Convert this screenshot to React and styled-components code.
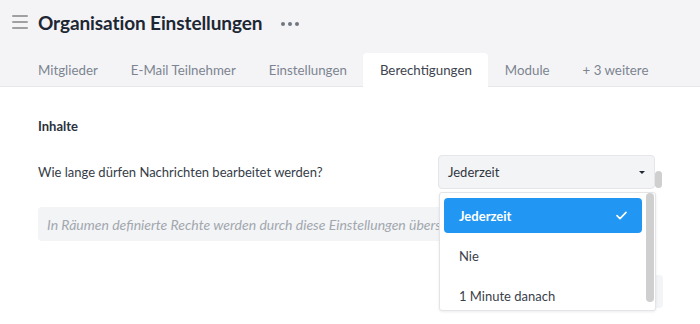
import React from "react";
import styled, { createGlobalStyle } from "styled-components";

const Global = createGlobalStyle`
  html, body { margin: 0; padding: 0; background: #ffffff; }
  body { font-family: "Source Sans Pro", Lato, "Noto Sans", sans-serif; overflow: hidden; }
  * { box-sizing: border-box; }
`;

const Page = styled.div`
  width: 700px;
  height: 324px;
  display: flex;
  flex-direction: column;
  overflow: hidden;
`;

const Header = styled.header`
  background: #f4f4f6;
  border-bottom: 1px solid #e6e7ea;
`;

const TitleRow = styled.div`
  height: 46px;
  display: flex;
  align-items: center;
  padding: 0 0 2px 12px;
`;

const Burger = styled.button`
  border: 0;
  background: none;
  padding: 0;
  width: 16px;
  height: 14px;
  margin-right: 10px;
  display: flex;
  flex-direction: column;
  justify-content: space-between;
  span {
    display: block;
    height: 2px;
    background: #a0a0a3;
    border-radius: 1px;
  }
`;

const Title = styled.h1`
  margin: 0;
  font-size: 19px;
  font-weight: 700;
  color: #1d2733;
  letter-spacing: -0.1px;
`;

const Dots = styled.div`
  display: flex;
  gap: 3px;
  margin-left: 19px;
  margin-top: 3px;
  span {
    width: 4px;
    height: 4px;
    border-radius: 50%;
    background: #707680;
  }
`;

const Tabs = styled.nav`
  display: flex;
  padding: 6px 0 0 21.5px;
  height: 40px;
  align-items: flex-end;
`;

const Tab = styled.div`
  height: 34px;
  padding: 0 16.5px;
  display: flex;
  align-items: center;
  white-space: nowrap;
  font-size: 13.3px;
  color: ${p => (p.$active ? "#3e4450" : "#7c8491")};
  background: ${p => (p.$active ? "#ffffff" : "transparent")};
  border-radius: 4px 4px 0 0;
  margin-bottom: -1px;
`;

const Body = styled.main`
  flex: 1;
  display: flex;
  min-height: 0;
`;

const Content = styled.section`
  flex: 1;
  padding: 30px 0 0 38px;
  display: flex;
  flex-direction: column;
`;

const SectionTitle = styled.h2`
  margin: 0 0 20px;
  font-size: 13px;
  font-weight: 700;
  color: #2a323d;
  line-height: 18px;
`;

const QuestionRow = styled.div`
  display: flex;
  align-items: center;
  justify-content: space-between;
`;

const Label = styled.span`
  font-size: 13px;
  color: #353c47;
`;

const SelectWrap = styled.div`
  position: relative;
  width: 217px;
`;

const SelectBox = styled.div`
  height: 34px;
  background: #f3f4f6;
  border: 1px solid #e4e6ea;
  border-radius: 4px;
  display: flex;
  align-items: center;
  justify-content: space-between;
  padding: 0 9px 0 9px;
  font-size: 13px;
  color: #2f3640;
`;

const Caret = styled.span`
  width: 0;
  height: 0;
  border-left: 3px solid transparent;
  border-right: 3px solid transparent;
  border-top: 3px solid #222831;
`;

const Menu = styled.div`
  position: absolute;
  top: 37px;
  left: 1px;
  width: 217px;
  height: 119px;
  background: #ffffff;
  border: 1px solid #e3e4e7;
  border-radius: 3px;
  box-shadow: 0 1px 3px rgba(0, 0, 0, 0.08);
  display: flex;
  overflow: hidden;
  z-index: 5;
`;

const MenuList = styled.div`
  flex: 1;
  padding: 5px 4px 0 4px;
  display: flex;
  flex-direction: column;
  gap: 5px;
`;

const MenuItem = styled.div`
  height: 35px;
  flex: none;
  display: flex;
  align-items: center;
  justify-content: space-between;
  padding: 0 15px 0 15px;
  border-radius: 4px;
  font-size: 13px;
  font-weight: ${p => (p.$selected ? 700 : 400)};
  color: ${p => (p.$selected ? "#ffffff" : "#3a414c")};
  background: ${p => (p.$selected ? "#2196f3" : "transparent")};
`;

const MenuScroll = styled.div`
  width: 8px;
  margin: 0 1px 8px 0;
  background: #cfcfcf;
  border-radius: 4px;
`;

const InfoBox = styled.div`
  margin-top: 18px;
  height: 34px;
  background: #f3f4f6;
  border-radius: 4px;
  display: flex;
  align-items: center;
  padding-left: 9px;
  font-size: 14px;
  font-style: italic;
  color: #a2a7ae;
  white-space: nowrap;
  overflow: hidden;
`;

const Footer = styled.div`
  display: flex;
  justify-content: flex-end;
  margin-top: 34px;
  margin-right: -8px;
`;

const SaveButton = styled.div`
  width: 100px;
  height: 33px;
  background: #f3f4f6;
  border-radius: 4px;
`;

const ScrollTrack = styled.div`
  width: 45px;
  padding: 84px 0 0 0;
`;

const Thumb = styled.div`
  width: 7px;
  height: 17px;
  background: #cfcfcf;
  border-radius: 4px;
`;

const Check = () => (
  <svg width="11" height="9" viewBox="0 0 11 9" fill="none">
    <path d="M1 4.6l3 3L10 1.4" stroke="#ffffff" strokeWidth="1.6" strokeLinecap="round" strokeLinejoin="round" />
  </svg>
);

export default function App() {
  const tabs = ["Mitglieder", "E-Mail Teilnehmer", "Einstellungen", "Berechtigungen", "Module", "+ 3 weitere"];
  const options = ["Jederzeit", "Nie", "1 Minute danach"];
  return (
    <Page>
      <Global />
      <Header>
        <TitleRow>
          <Burger aria-label="Menü">
            <span />
            <span />
            <span />
          </Burger>
          <Title>Organisation Einstellungen</Title>
          <Dots>
            <span />
            <span />
            <span />
          </Dots>
        </TitleRow>
        <Tabs>
          {tabs.map(t => (
            <Tab key={t} $active={t === "Berechtigungen"}>{t}</Tab>
          ))}
        </Tabs>
      </Header>
      <Body>
        <Content>
          <SectionTitle>Inhalte</SectionTitle>
          <QuestionRow>
            <Label>Wie lange dürfen Nachrichten bearbeitet werden?</Label>
            <SelectWrap>
              <SelectBox>
                Jederzeit
                <Caret />
              </SelectBox>
              <Menu>
                <MenuList>
                  {options.map((o, i) => (
                    <MenuItem key={o} $selected={i === 0}>
                      {o}
                      {i === 0 && <Check />}
                    </MenuItem>
                  ))}
                </MenuList>
                <MenuScroll />
              </Menu>
            </SelectWrap>
          </QuestionRow>
          <InfoBox>In Räumen definierte Rechte werden durch diese Einstellungen überschrieben.</InfoBox>
          <Footer>
            <SaveButton />
          </Footer>
        </Content>
        <ScrollTrack>
          <Thumb />
        </ScrollTrack>
      </Body>
    </Page>
  );
}
